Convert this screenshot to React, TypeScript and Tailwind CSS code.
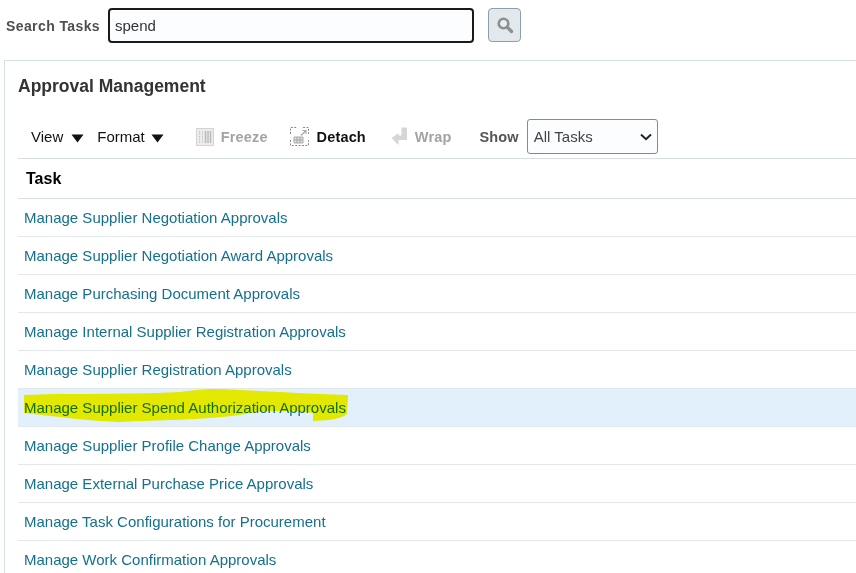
import React from "react";

const tasks = [
  "Manage Supplier Negotiation Approvals",
  "Manage Supplier Negotiation Award Approvals",
  "Manage Purchasing Document Approvals",
  "Manage Internal Supplier Registration Approvals",
  "Manage Supplier Registration Approvals",
  "Manage Supplier Spend Authorization Approvals",
  "Manage Supplier Profile Change Approvals",
  "Manage External Purchase Price Approvals",
  "Manage Task Configurations for Procurement",
  "Manage Work Confirmation Approvals",
];

function Caret({ className }: { className: string }) {
  return (
    <svg width="13" height="9" viewBox="0 0 13 9" className={className}>
      <path d="M0.5 0.5H12.5L6.5 8.5Z" fill="#111" />
    </svg>
  );
}

export default function App() {
  return (
    <div className="w-[856px] h-[573px] overflow-hidden bg-white font-['Liberation_Sans',Arial,sans-serif]">
      <div className="h-[60px] flex items-start pl-[6px]">
        <span className="mt-[18px] text-[14px] leading-[17px] font-bold text-[#4f4f4f] tracking-[0.4px] w-[102px]">Search Tasks</span>
        <div className="mt-[8px] w-[366px] h-[35px] border-2 border-[#1a1a1a] rounded-[4px] bg-[#fbfdff] pl-[5px] text-[15px] leading-[32px] text-[#333]">spend</div>
        <button className="mt-[8px] ml-[14px] w-[33px] h-[34px] rounded-[4px] border border-[#8ba0ae] bg-[#e3e8ec] flex items-center justify-center">
          <svg width="18" height="18" viewBox="0 0 18 18">
            <circle cx="7.5" cy="7.5" r="4.8" fill="#e9edef" stroke="#8b9094" strokeWidth="2.6" />
            <path d="M11 11L15.5 15.5" stroke="#8b9094" strokeWidth="3.2" strokeLinecap="round" />
          </svg>
        </button>
      </div>
      <div className="ml-[4px] border-l border-t border-[#d6dfe6] h-[513px] pl-[13px]">
        <h1 className="pt-[14px] text-[17.5px] leading-[22px] font-bold text-[#333] h-[58px]">Approval Management</h1>
        <div className="h-[40px] flex items-center border-b border-[#d6dfe6] text-[14.5px] pb-[2px]">
          <span className="ml-[13px] text-[#111] text-[15px]">View</span>
          <Caret className="ml-2 mt-[2px]" />
          <span className="ml-[13px] text-[#111] text-[15px]">Format</span>
          <Caret className="ml-[6px] mt-[2px]" />
          <svg width="18" height="18" viewBox="0 0 18 18" className="ml-[32px] -mt-[2px]">
            <rect x="0.5" y="0.5" width="17" height="17" fill="#ececec" stroke="#d4d4d4" />
            <path d="M3.5 3V15M6.5 3V15" stroke="#c6c6c6" strokeDasharray="1.5 1" />
            <path d="M9.5 3V15M12 3V15M14.5 3V15" stroke="#b9b9b9" strokeWidth="1.4" />
          </svg>
          <span className="ml-[7px] font-bold text-[#a3a3a3] tracking-[0.15px]">Freeze</span>
          <svg width="19" height="19" viewBox="0 0 19 19" className="ml-[22px] -mt-[2px]">
            <path d="M0.5 13V18.5H18.5V13M0.5 7V0.5H7M13 0.5H18.5V7" fill="none" stroke="#8a8a8a" strokeDasharray="2 1.4" />
            <path d="M11 8.5L15.5 4M12.5 3.5H16V7" fill="none" stroke="#a5a5a5" strokeWidth="1.1" />
            <path d="M4 10H13V16H4ZM4 13H13M7 10V16M10 10V16" fill="#e4e4e4" stroke="#8e8e8e" strokeWidth="0.7" />
          </svg>
          <span className="ml-[8px] font-bold text-[#111] tracking-[0.15px]">Detach</span>
          <svg width="17" height="19" viewBox="0 0 17 19" className="ml-[25px] -mt-[2px]">
            <path d="M10.5 0.5H16V13H7.5V18L0.5 11L7.5 6V8.5H10.5Z" fill="#d6d6d6" />
          </svg>
          <span className="ml-[7px] font-bold text-[#a3a3a3] tracking-[0.15px]">Wrap</span>
          <span className="ml-[28px] font-bold text-[#555] tracking-[0.15px]">Show</span>
          <div className="relative ml-[8px] -mt-[2px] w-[131px] h-[35px] rounded-[3px] border border-[#7a8d9a] bg-[#fbfdff] pl-[6px] pt-[1px] flex items-center text-[#444] text-[15px]">
            All Tasks
            <svg width="12" height="8" viewBox="0 0 12 8" className="absolute right-[5px] top-[13px]">
              <path d="M1 1.5L6 6.2L11 1.5" fill="none" stroke="#222" strokeWidth="2" />
            </svg>
          </div>
        </div>
        <div className="h-[40px] flex items-center pl-[8px] border-b border-[#d6dfe6] text-[16px] font-bold text-black">Task</div>
        {tasks.map((t, i) => (
          <div
            key={t}
            className={
              "relative h-[38px] flex items-center pl-[6px] pt-[1px] border-b border-[#e3e8ec] text-[15px] text-[#14708f] " +
              (i === 5 ? "bg-[#e2f0fc]" : "")
            }
          >
            {t}
            {i === 5 && (
              <svg width="340" height="44" viewBox="0 0 340 44" className="absolute left-[2px] top-[-4px] mix-blend-multiply">
                <path
                  d="M4 10 C40 8 100 10 160 7 C175 5 185 4 197 4 C225 5 270 8 328 10 L327 29 C323 32 318 35 293 36 L293 28 C270 25 240 25 220 30 C180 35 140 35 100 37 C70 36 40 32 4 28 Z"
                  fill="#fff700"
                />
              </svg>
            )}
          </div>
        ))}
      </div>
    </div>
  );
}
